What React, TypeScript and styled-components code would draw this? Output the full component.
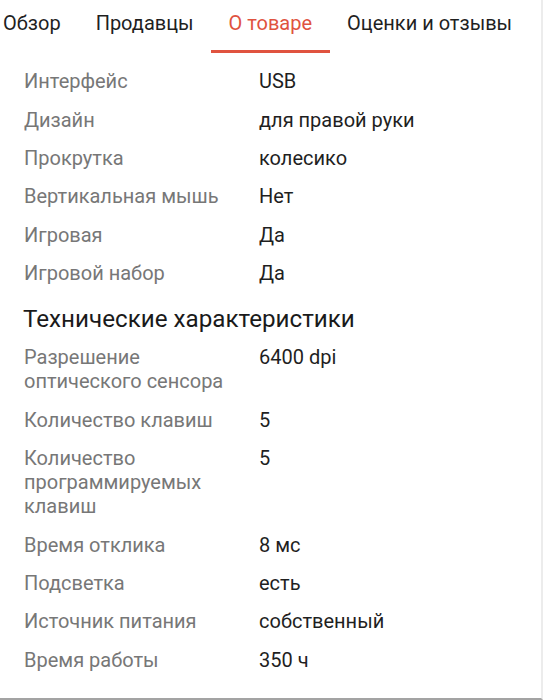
import React from "react";
import styled, { createGlobalStyle } from "styled-components";

const Global = createGlobalStyle`
  html, body { margin: 0; padding: 0; background: #fff; }
  body { font-family: Roboto, "Noto Sans", Arial, sans-serif; overflow: hidden; }
`;

const Page = styled.div`
  width: 543px;
  height: 700px;
  box-sizing: border-box;
  display: flex;
  flex-direction: column;
  border-right: 2px solid #ececec;
  border-bottom: 2px solid #a3a3a3;
  overflow: hidden;
`;

const TabBar = styled.nav`
  display: flex;
  margin-left: -14.5px;
  height: 53px;
  flex-shrink: 0;
`;

const Tab = styled.div<{ $active?: boolean }>`
  position: relative;
  padding: 10px 17.5px 0;
  height: 100%;
  display: flex;
  align-items: flex-start;
  box-sizing: border-box;
  white-space: nowrap;
  font-size: 20px;
  line-height: 26px;
  color: ${(p) => (p.$active ? "#e0533f" : "#1f1f1f")};
  &::after {
    content: "";
    display: ${(p) => (p.$active ? "block" : "none")};
    position: absolute;
    left: 0;
    right: 0;
    bottom: 0;
    height: 3px;
    background: #e0533f;
  }
`;

const Content = styled.div`
  padding: 9px 0 0 24px;
  display: flex;
  flex-direction: column;
`;

const Row = styled.div`
  display: grid;
  grid-template-columns: 235px 1fr;
  padding: 7.2px 0;
  font-size: 20px;
  line-height: 24px;
`;

const Label = styled.div`
  color: #777777;
`;

const Value = styled.div`
  color: #1f1f1f;
`;

const SectionTitle = styled.h2`
  margin: 12px 0 4px -1px;
  font-weight: 400;
  font-size: 24.2px;
  line-height: 30px;
  color: #1a1a1a;
`;

const LabelText = styled.span`
  display: block;
  max-width: 212px;
`;

const tabs = ["Обзор", "Продавцы", "О товаре", "Оценки и отзывы"];

const general: [string, string][] = [
  ["Интерфейс", "USB"],
  ["Дизайн", "для правой руки"],
  ["Прокрутка", "колесико"],
  ["Вертикальная мышь", "Нет"],
  ["Игровая", "Да"],
  ["Игровой набор", "Да"],
];

const tech: [string, string][] = [
  ["Разрешение оптического сенсора", "6400 dpi"],
  ["Количество клавиш", "5"],
  ["Количество программируемых клавиш", "5"],
  ["Время отклика", "8 мс"],
  ["Подсветка", "есть"],
  ["Источник питания", "собственный"],
  ["Время работы", "350 ч"],
];

export default function App() {
  return (
    <>
      <Global />
      <Page>
        <TabBar>
          {tabs.map((t) => (
            <Tab key={t} $active={t === "О товаре"}>
              {t}
            </Tab>
          ))}
        </TabBar>
        <Content>
          {general.map(([k, v]) => (
            <Row key={k}>
              <Label>{k}</Label>
              <Value>{v}</Value>
            </Row>
          ))}
          <SectionTitle>Технические характеристики</SectionTitle>
          {tech.map(([k, v]) => (
            <Row key={k}>
              <Label>
                <LabelText>{k}</LabelText>
              </Label>
              <Value>{v}</Value>
            </Row>
          ))}
        </Content>
      </Page>
    </>
  );
}
